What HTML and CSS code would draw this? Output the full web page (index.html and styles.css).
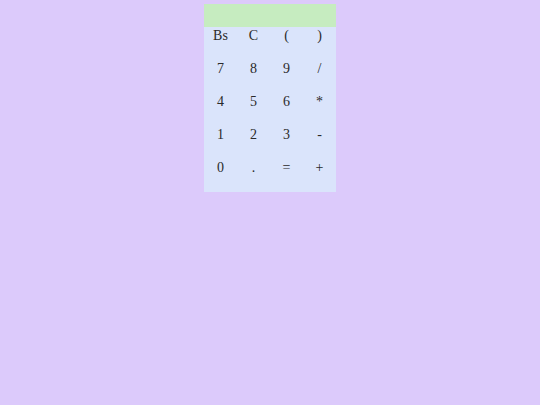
FILE: index.html
```html
<!DOCTYPE html>
<html>
<head>
<meta charset="utf-8">
<link rel="stylesheet" href="styles.css">
</head>
<body>
<div class="calc">
  <div class="display"></div>
  <div class="keys">
    <div class="key">Bs</div><div class="key">C</div><div class="key">(</div><div class="key">)</div>
    <div class="key">7</div><div class="key">8</div><div class="key">9</div><div class="key">/</div>
    <div class="key">4</div><div class="key">5</div><div class="key">6</div><div class="key">*</div>
    <div class="key">1</div><div class="key">2</div><div class="key">3</div><div class="key">-</div>
    <div class="key">0</div><div class="key">.</div><div class="key">=</div><div class="key">+</div>
  </div>
</div>
</body>
</html>
```

FILE: styles.css
```css
html, body {
  margin: 0;
  padding: 0;
  background: #dccafb;
  height: 100%;
}
body {
  font-family: "Liberation Serif", serif;
  font-size: 14px;
  color: #2a2a2a;
  padding-top: 4px;
  box-sizing: border-box;
}
.calc {
  width: 132px;
  margin: 0 auto;
  background: #dae4fb;
}
.display {
  height: 23px;
  background: #c6ecc0;
}
.keys {
  display: grid;
  grid-template-columns: repeat(4, 33px);
  grid-auto-rows: 33px;
}
.key {
  text-align: center;
  line-height: 18px;
}
```
